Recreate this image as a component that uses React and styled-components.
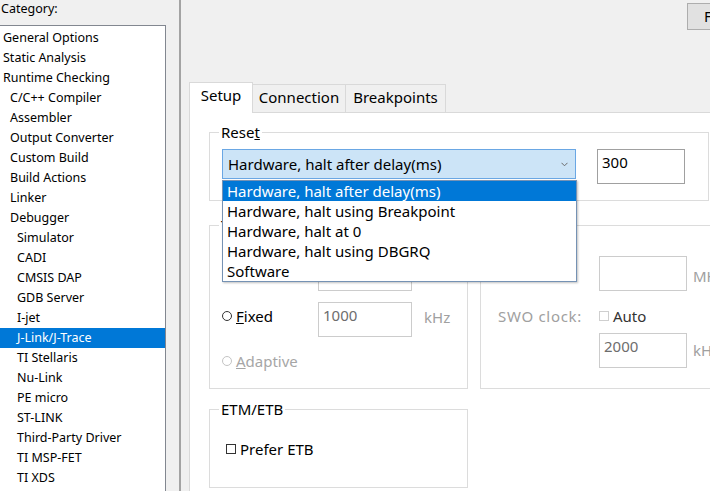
import styled, { createGlobalStyle } from "styled-components";

const GlobalStyle = createGlobalStyle`
  *, *::before, *::after { box-sizing: border-box; }
  html, body { margin: 0; padding: 0; }
  body {
    background: #f0f0f0;
    font-family: "Noto Sans", "Open Sans", sans-serif;
    color: #000;
    overflow: hidden;
  }
`;

const Dialog = styled.div`
  display: flex;
  width: 710px;
  height: 491px;
  overflow: hidden;
`;

const Sidebar = styled.div`
  flex: 0 0 181px;
  display: flex;
  flex-direction: column;
  font-size: 12.5px;
  border-right: 2px solid #a3a3a3;
`;

const CategoryLabel = styled.div`
  height: 25px;
  line-height: 17px;
  padding-left: 1px;
`;

const Tree = styled.div`
  flex: 1;
  width: 166px;
  background: #fff;
  border-top: 1px solid #828790;
  border-right: 1px solid #828790;
  padding-top: 2px;
`;

const TreeItem = styled.div`
  height: 20px;
  line-height: 20px;
  white-space: nowrap;
  padding-left: ${(p) => 3 + p.$level * 7}px;
  background: ${(p) => (p.$selected ? "#0078d7" : "transparent")};
  color: ${(p) => (p.$selected ? "#fff" : "#000")};
`;

const Main = styled.div`
  flex: 0 0 640px;
  display: flex;
  flex-direction: column;
  padding-left: 8px;
  font-size: 15px;
`;

const TopBar = styled.div`
  height: 82px;
  display: flex;
  justify-content: flex-end;
  align-items: flex-start;
  padding: 3px 12px 0 0;
`;

const Button = styled.div`
  width: 122px;
  height: 27px;
  line-height: 25px;
  padding-left: 16px;
  white-space: nowrap;
  overflow: hidden;
  background: #e1e1e1;
  border: 1px solid #adadad;
`;

const TabStrip = styled.div`
  display: flex;
  align-items: flex-end;
  height: 30px;
`;

const Tab = styled.div`
  width: ${(p) => p.$width}px;
  height: ${(p) => (p.$active ? 31 : 28)}px;
  margin-bottom: ${(p) => (p.$active ? -1 : 0)}px;
  margin-left: ${(p) => (p.$first ? 0 : -1)}px;
  position: relative;
  z-index: ${(p) => (p.$active ? 2 : 1)};
  padding-top: ${(p) => (p.$active ? 2 : 2)}px;
  line-height: 20px;
  text-align: center;
  white-space: nowrap;
  background: ${(p) => (p.$active ? "#fff" : "#f0f0f0")};
  border: 1px solid #d9d9d9;
  border-bottom: none;
`;

const Pane = styled.div`
  flex: 1;
  background: #fff;
  border-top: 1px solid #d9d9d9;
  border-left: 1px solid #d9d9d9;
  padding-left: 19px;
  display: flex;
  flex-direction: column;
`;

const Group = styled.fieldset`
  margin: ${(p) => p.$top}px 0 0 0;
  width: ${(p) => p.$width}px;
  border: 1px solid #dcdcdc;
  padding: 0 0 ${(p) => p.$bottom}px 9px;
  min-width: 0;
`;

const Legend = styled.legend`
  padding: 0 2px;
  line-height: 20px;
  white-space: nowrap;
`;

const GroupBody = styled.div`
  padding: ${(p) => p.$top}px 0 0 ${(p) => p.$left}px;
  display: flex;
  flex-direction: column;
`;

const GroupRow = styled.div`
  display: flex;
  gap: 12px;
  margin-top: 14px;
`;

const ResetRow = styled.div`
  display: flex;
  align-items: flex-start;
  gap: 21px;
`;

const ComboWrap = styled.div`
  position: relative;
`;

const Combo = styled.div`
  width: 354px;
  height: 30px;
  display: flex;
  align-items: center;
  justify-content: space-between;
  padding: 0 7px 0 5px;
  line-height: 28px;
  background: #cce4f7;
  border: 1px solid #6aa7e4;
  white-space: nowrap;
`;

const DropList = styled.div`
  position: absolute;
  left: 0;
  top: calc(100% + 1px);
  width: 355px;
  z-index: 10;
  background: #fff;
  border: 1px solid #7592b4;
  box-shadow: 1px 1px 2px rgba(0, 0, 0, 0.25);
`;

const DropItem = styled.div`
  height: 20px;
  line-height: 20px;
  padding-left: 4px;
  white-space: nowrap;
  background: ${(p) => (p.$active ? "#0078d7" : "#fff")};
  color: ${(p) => (p.$active ? "#fff" : "#000")};
`;

const TextBox = styled.div`
  width: ${(p) => p.$width}px;
  height: 35px;
  padding: 2px 4px 0;
  line-height: 20px;
  background: #fff;
  border: 1px solid ${(p) => (p.$disabled ? "#cccccc" : "#a0a0a0")};
  color: ${(p) => (p.$disabled ? "#6d6d6d" : "#000")};
`;

const FormRow = styled.div`
  display: grid;
  grid-template-columns: ${(p) => p.$cols};
  align-items: start;
  height: ${(p) => p.$height}px;
  margin-top: ${(p) => p.$gap}px;
`;

const Choice = styled.div`
  display: flex;
  align-items: center;
  gap: ${(p) => p.$gap}px;
  padding-top: ${(p) => p.$pt || 0}px;
  line-height: 20px;
  white-space: nowrap;
  color: ${(p) => (p.$disabled ? "#a6a6a6" : "#000")};
`;

const RadioDot = styled.span`
  width: 10px;
  height: 10px;
  border-radius: 50%;
  border: 1px solid ${(p) => (p.$disabled ? "#c4c4c4" : "#333")};
`;

const CheckBox = styled.span`
  width: 10px;
  height: 10px;
  border: 1px solid ${(p) => (p.$disabled ? "#cfcfcf" : "#333")};
`;

const Muted = styled.span`
  color: #a0a0a0;
  line-height: 20px;
  padding-top: ${(p) => p.$pt || 0}px;
  padding-left: ${(p) => p.$pad || 0}px;
  letter-spacing: ${(p) => p.$spacing || 0}px;
  white-space: nowrap;
`;

const AutoText = styled.span`
  color: #333;
`;

const categories = [
  ["General Options", 0],
  ["Static Analysis", 0],
  ["Runtime Checking", 0],
  ["C/C++ Compiler", 1],
  ["Assembler", 1],
  ["Output Converter", 1],
  ["Custom Build", 1],
  ["Build Actions", 1],
  ["Linker", 1],
  ["Debugger", 1],
  ["Simulator", 2],
  ["CADI", 2],
  ["CMSIS DAP", 2],
  ["GDB Server", 2],
  ["I-jet", 2],
  ["J-Link/J-Trace", 2],
  ["TI Stellaris", 2],
  ["Nu-Link", 2],
  ["PE micro", 2],
  ["ST-LINK", 2],
  ["Third-Party Driver", 2],
  ["TI MSP-FET", 2],
  ["TI XDS", 2],
];

const resetOptions = [
  "Hardware, halt after delay(ms)",
  "Hardware, halt using Breakpoint",
  "Hardware, halt at 0",
  "Hardware, halt using DBGRQ",
  "Software",
];

const Chevron = () => (
  <svg width="7" height="5" viewBox="0 0 7 5">
    <path d="M0.5 0.8 L3.5 3.8 L6.5 0.8" fill="none" stroke="#6b6b6b" strokeWidth="1" />
  </svg>
);

const App = () => {
  return (
    <>
      <GlobalStyle />
      <Dialog>
        <Sidebar>
          <CategoryLabel>Category:</CategoryLabel>
          <Tree>
            {categories.map(([name, level]) => (
              <TreeItem key={name} $level={level} $selected={name === "J-Link/J-Trace"}>
                {name}
              </TreeItem>
            ))}
          </Tree>
        </Sidebar>

        <Main>
          <TopBar>
            <Button>Factory Settings</Button>
          </TopBar>

          <TabStrip>
            <Tab $active $first $width={64}>Setup</Tab>
            <Tab $width={94}>Connection</Tab>
            <Tab $width={101}>Breakpoints</Tab>
          </TabStrip>

          <Pane>
            <Group $top={9} $width={500} $bottom={16}>
              <Legend>
                Rese<u>t</u>
              </Legend>
              <GroupBody $top={7} $left={3}>
                <ResetRow>
                  <ComboWrap>
                    <Combo>
                      <span>{resetOptions[0]}</span>
                      <Chevron />
                    </Combo>
                    <DropList>
                      {resetOptions.map((opt, i) => (
                        <DropItem key={opt} $active={i === 0}>
                          {opt}
                        </DropItem>
                      ))}
                    </DropList>
                  </ComboWrap>
                  <TextBox $width={88}>300</TextBox>
                </ResetRow>
              </GroupBody>
            </Group>

            <GroupRow>
              <Group $top={0} $width={259} $bottom={16}>
                <Legend>Target speed</Legend>
                <GroupBody $top={21} $left={3}>
                  <FormRow $cols="96px 94px auto" $height={35} $gap={0}>
                    <Choice $gap={4} $pt={5}>
                      <RadioDot />
                      <span>
                        <u>A</u>uto detect
                      </span>
                    </Choice>
                    <TextBox $width={94} $disabled />
                    <Muted $pad={12} $pt={5}>kHz</Muted>
                  </FormRow>
                  <FormRow $cols="96px 94px auto" $height={35} $gap={11}>
                    <Choice $gap={4} $pt={4}>
                      <RadioDot />
                      <span>
                        <u>F</u>ixed
                      </span>
                    </Choice>
                    <TextBox $width={94} $disabled>
                      1000
                    </TextBox>
                    <Muted $pad={12} $pt={5}>kHz</Muted>
                  </FormRow>
                  <FormRow $cols="96px 94px auto" $height={20} $gap={14}>
                    <Choice $gap={4} $disabled>
                      <RadioDot $disabled />
                      <span>
                        <u>A</u>daptive
                      </span>
                    </Choice>
                  </FormRow>
                </GroupBody>
              </Group>

              <Group $top={0} $width={262} $bottom={20}>
                <Legend>Clock setup</Legend>
                <GroupBody $top={21} $left={8}>
                  <FormRow $cols="101px 88px auto" $height={35} $gap={0}>
                    <Muted $spacing={0.7} $pt={8}>CPU clock:</Muted>
                    <TextBox $width={88} $disabled />
                    <Muted $pad={6} $pt={10}>MHz</Muted>
                  </FormRow>
                  <FormRow $cols="101px 88px auto" $height={20} $gap={15}>
                    <Muted $spacing={0.7}>SWO clock:</Muted>
                    <Choice $gap={4}>
                      <CheckBox $disabled />
                      <AutoText>Auto</AutoText>
                    </Choice>
                  </FormRow>
                  <FormRow $cols="101px 88px auto" $height={35} $gap={7}>
                    <span />
                    <TextBox $width={88} $disabled>
                      2000
                    </TextBox>
                    <Muted $pad={6} $pt={7}>kHz</Muted>
                  </FormRow>
                </GroupBody>
              </Group>
            </GroupRow>

            <Group $top={10} $width={259} $bottom={28}>
              <Legend>ETM/ETB</Legend>
              <GroupBody $top={20} $left={7}>
                <FormRow $cols="auto" $height={20} $gap={0}>
                  <Choice $gap={4}>
                    <CheckBox />
                    <span>Prefer ETB</span>
                  </Choice>
                </FormRow>
              </GroupBody>
            </Group>
          </Pane>
        </Main>
      </Dialog>
    </>
  );
};

export default App;
